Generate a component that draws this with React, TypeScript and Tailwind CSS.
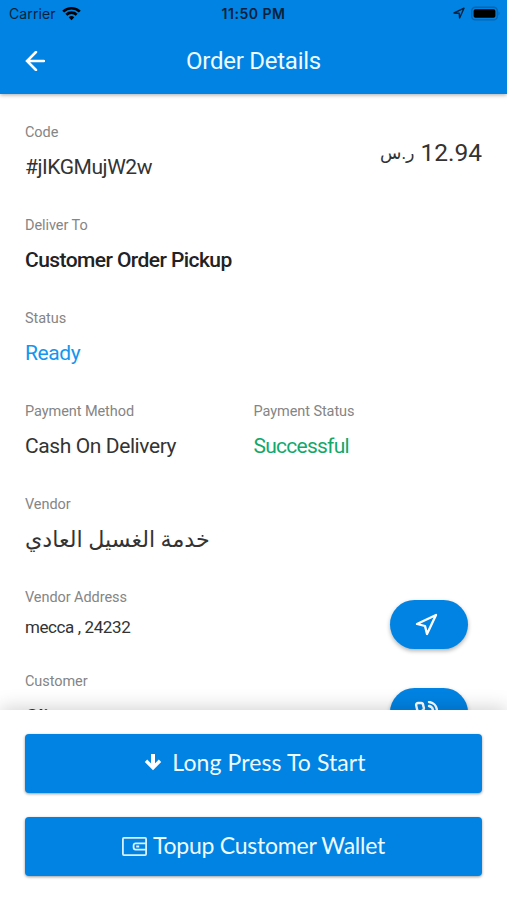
import type { ReactNode } from 'react'
import { FiNavigation, FiPhoneCall } from 'react-icons/fi'
import clsx from 'clsx'

function StatusBar() {
  return (
    <div className="relative flex h-7 items-center justify-between pl-[9px] pr-[6px] text-[14px] text-[#06213c]">
      <div className="flex items-center gap-1.5 pb-px font-['Inter']">
        <span className="tracking-[0.1px]">Carrier</span>
        <svg className="h-[15px] w-[19px]" viewBox="0 0 19 15" fill="none" stroke="#000" strokeWidth="2.7">
          <path d="M1.2 5.6a12 12 0 0 1 16.6 0" />
          <path d="M4.3 8.8a7.5 7.5 0 0 1 10.4 0" />
          <path d="M9.5 14.2 6.7 11.3a4 4 0 0 1 5.6 0z" fill="#000" stroke="none" />
        </svg>
      </div>
      <span className="absolute inset-x-0 pb-px text-center font-['Inter'] font-semibold tracking-[0.5px]">11:50 PM</span>
      <div className="flex items-center gap-[6px] pb-[2px]">
        <svg className="h-3 w-3" viewBox="0 0 12 12" fill="none" stroke="#06213c" strokeWidth="1.4" strokeLinejoin="round">
          <path d="M1 6 11 1.2 6.6 11 6.2 6.3z" />
        </svg>
        <svg className="h-[15px] w-[30px]" viewBox="0 0 30 15">
          <rect x="0.7" y="1.2" width="25.6" height="12.6" rx="3.6" fill="none" stroke="#0864ae" strokeWidth="1.4" />
          <rect x="2.6" y="3.2" width="21.8" height="8.6" rx="1.8" fill="#000" />
          <path d="M27.5 5.3q2 2.2 0 4.4z" fill="#0864ae" />
        </svg>
      </div>
    </div>
  )
}

function Header() {
  return (
    <header className="relative z-10 h-[94px] bg-[#0083e3] shadow-[0_1px_4px_rgba(0,0,0,0.35)]">
      <StatusBar />
      <div className="relative flex h-[66px] items-center pl-[25px]">
        <svg className="h-5 w-5" viewBox="0 0 20 20" fill="none" stroke="#fff" strokeWidth="2.5" strokeLinecap="round">
          <path d="M19 10H2M11 1 2 10l9 9" />
        </svg>
        <h1 className="absolute inset-x-0 text-center text-[24px] tracking-[-0.25px] text-[#eefaff]">Order Details</h1>
      </div>
    </header>
  )
}

interface FieldProps {
  label: string
  children: ReactNode
  className?: string
}

function Field({ label, children, className = 'tracking-[-0.4px]' }: FieldProps) {
  return (
    <div className="h-[93px]">
      <Label>{label}</Label>
      <div className={clsx('mt-1.5 h-8 whitespace-nowrap text-[21px] leading-8', className)}>{children}</div>
    </div>
  )
}

function Label({ children }: { children: ReactNode }) {
  return <div className="h-6 text-[14.5px] leading-6 tracking-[-0.07px] text-[#858585]">{children}</div>
}

function PillButton({ children }: { children: ReactNode }) {
  return (
    <button className="flex h-[49px] w-[78px] items-center justify-center rounded-full bg-[#0083e3] text-white shadow-[0_2px_4px_rgba(0,0,0,0.3)]">
      {children}
    </button>
  )
}

function ActionButton({ children, className }: { children: ReactNode; className?: string }) {
  return (
    <button
      className={clsx(
        'flex h-[59px] w-full items-center justify-center rounded-[4px] bg-[#0083e3] pb-[3px]',
        "font-['Lato'] text-[23px] text-[#eefaff] shadow-[0_1px_3px_rgba(0,0,0,0.4)]",
        className
      )}
    >
      {children}
    </button>
  )
}

export default function App() {
  return (
    <div className="flex h-[900px] w-[507px] flex-col overflow-hidden bg-white font-['Roboto','DejaVu_Sans',sans-serif] text-[#333]">
      <Header />

      <main className="h-[616px] px-[25px] pt-[27px]">
        <div className="flex justify-between">
          <Field label="Code" className="tracking-[-0.45px]">#jIKGMujW2w</Field>
          <div dir="rtl" className="flex h-8 items-center gap-1.5 pt-[32px]">
            <span className="text-[24.5px]">12.94</span>
            <span className="text-[17.5px]">ر.س</span>
          </div>
        </div>
        <Field label="Deliver To" className="font-medium tracking-[-0.57px] text-[#222]">Customer Order Pickup</Field>
        <Field label="Status" className="tracking-[-0.4px] text-[#1496ee]">Ready</Field>
        <div className="grid grid-cols-2">
          <Field label="Payment Method">Cash On Delivery</Field>
          <Field label="Payment Status" className="tracking-[-0.75px] text-[#12a86b]">Successful</Field>
        </div>
        <Field label="Vendor" className="text-[22.2px]"><span dir="rtl">خدمة الغسيل العادي</span></Field>

        <div className="flex h-[84px] justify-between pr-[14px]">
          <div>
            <Label>Vendor Address</Label>
            <div className="mt-[5px] text-[17px] leading-6 tracking-[-0.4px]">mecca , 24232</div>
          </div>
          <div className="pt-[14px]">
            <PillButton><FiNavigation className="mr-[6px] h-6 w-6" strokeWidth={2.3} /></PillButton>
          </div>
        </div>
        <div className="flex h-10 justify-between pr-[14px]">
          <Field label="Customer" className="pt-px font-medium tracking-[-0.4px]">Client</Field>
          <div className="pt-[18px]">
            <PillButton><FiPhoneCall className="mr-[6px] h-6 w-6" strokeWidth={2.4} /></PillButton>
          </div>
        </div>
      </main>

      <footer className="relative flex h-[190px] flex-col gap-6 bg-white px-[25px] pt-6 shadow-[0_-2px_18px_rgba(0,0,0,0.18)]">
        <ActionButton className="pl-[3px] tracking-[0.1px]">
          <svg className="mr-[10px] h-[18px] w-[18px]" viewBox="0 0 18 18" fill="none" stroke="#fff" strokeWidth="4">
            <path d="M9 1v13" />
            <path d="m2 7.8 7 7 7-7" strokeWidth="3.4" />
          </svg>
          Long Press To Start
        </ActionButton>
        <ActionButton className="tracking-[-0.24px]">
          <svg className="mr-[6px] mt-[2px] h-[19px] w-[25px]" viewBox="0 0 25 19" fill="none" stroke="#d8f1ff" strokeWidth="1.8">
            <rect x="0.9" y="0.9" width="23.2" height="17.2" rx="1" />
            <path d="M24 6.4H13.6a2 2 0 0 0-2 2v2.2a2 2 0 0 0 2 2H24" />
            <path d="M14.2 9.5h3" strokeWidth="2" />
          </svg>
          Topup Customer Wallet
        </ActionButton>
      </footer>
    </div>
  )
}
